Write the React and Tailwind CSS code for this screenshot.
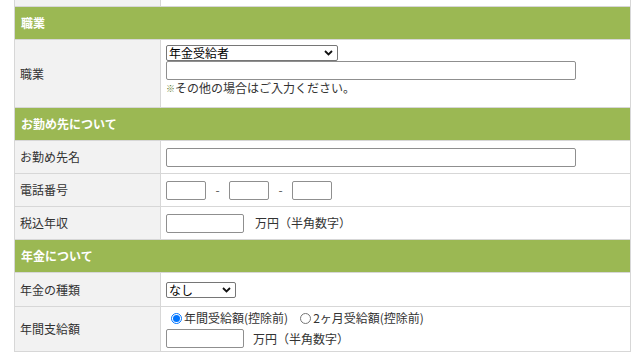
import { useState } from "react";

const font = { fontFamily: '"Noto Sans CJK JP", "Noto Sans", sans-serif' };

function Chevron() {
    return (
        <svg width="9" height="6" viewBox="0 0 9 6" className="shrink-0">
            <path d="M1 1 L4.5 4.5 L8 1" stroke="#111" strokeWidth="1.8" fill="none" />
        </svg>
    );
}

function FakeSelect({ value, width }) {
    return (
        <div className={`flex items-center justify-between h-[16px] pl-[2px] pr-[4px] border border-[#767676] rounded-[2px] bg-white text-[12px] leading-none text-black ${width}`}>
            <span>{value}</span>
            <Chevron />
        </div>
    );
}

function Box({ width, height = "h-[19px]" }) {
    return <div className={`${width} ${height} border border-[#8f8f8f] rounded-[2px] bg-white`} />;
}

function Header({ title }) {
    return (
        <div className="h-[33px] flex items-center pl-[6px] bg-[#9bb853] border-b border-[#d7d7d7] text-white font-bold text-[12px]">
            {title}
        </div>
    );
}

function Row({ label, height, top, children }) {
    return (
        <div className={`flex border-b border-[#d7d7d7] ${height}`}>
            <div className="w-[146px] shrink-0 flex items-center pl-[5px] bg-[#f2f2f2] border-r border-[#d7d7d7] text-[12px] text-[#333]">
                {label}
            </div>
            <div className={`flex-1 flex flex-col pl-[5px] text-[12px] text-[#333] bg-white ${top ? "justify-start pt-[5px]" : "justify-center"}`}>
                {children}
            </div>
        </div>
    );
}

export default function App() {
    const [pension, setPension] = useState("year");

    return (
        <div className="w-[640px] h-[360px] bg-white overflow-hidden" style={font}>
            <div className="ml-[14px] w-[617px] border-x border-[#d7d7d7]">
                {/* partial row from above */}
                <div className="flex h-[7px] border-b border-[#d7d7d7]">
                    <div className="w-[146px] bg-[#f2f2f2] border-r border-[#d7d7d7]" />
                    <div className="flex-1" />
                </div>

                <Header title="職業" />
                <Row label="職業" height="h-[68px]" top>
                    <FakeSelect value="年金受給者" width="w-[172px]" />
                    <Box width="w-[410px]" />
                    <div className="mt-[2px] leading-none flex items-center">
                        <span className="text-[9px] text-[#5a7a2a]">※</span>
                        <span>その他の場合はご入力ください。</span>
                    </div>
                </Row>

                <Header title="お勤め先について" />
                <Row label="お勤め先名" height="h-[33px]">
                    <Box width="w-[410px]" />
                </Row>
                <Row label="電話番号" height="h-[33px]">
                    <div className="flex items-center">
                        <Box width="w-[40px]" />
                        <span className="w-[23px] text-center text-[#555]">-</span>
                        <Box width="w-[40px]" />
                        <span className="w-[23px] text-center text-[#555]">-</span>
                        <Box width="w-[40px]" />
                    </div>
                </Row>
                <Row label="税込年収" height="h-[33px]">
                    <div className="flex items-center">
                        <Box width="w-[78px]" />
                        <span className="ml-[11px]">万円（半角数字）</span>
                    </div>
                </Row>

                <Header title="年金について" />
                <Row label="年金の種類" height="h-[34px]">
                    <FakeSelect value="なし" width="w-[70px]" />
                </Row>
                <Row label="年間支給額" height="h-[45px]">
                    <div className="flex items-center h-[16px] leading-none">
                        <label className="flex items-center cursor-pointer" onClick={() => setPension("year")}>
                            <span className={`ml-[5px] mr-[2px] w-[11px] h-[11px] rounded-full border flex items-center justify-center ${pension === "year" ? "border-[#0075ff]" : "border-[#767676]"}`}>
                                {pension === "year" && <span className="w-[7px] h-[7px] rounded-full bg-[#0075ff]" />}
                            </span>
                            年間受給額(控除前)
                        </label>
                        <label className="flex items-center ml-[12px] cursor-pointer" onClick={() => setPension("month")}>
                            <span className={`mr-[2px] w-[11px] h-[11px] rounded-full border flex items-center justify-center ${pension === "month" ? "border-[#0075ff]" : "border-[#767676]"}`}>
                                {pension === "month" && <span className="w-[7px] h-[7px] rounded-full bg-[#0075ff]" />}
                            </span>
                            2ヶ月受給額(控除前)
                        </label>
                    </div>
                    <div className="flex items-center mt-[3px]">
                        <Box width="w-[78px]" />
                        <span className="ml-[9px]">万円（半角数字）</span>
                    </div>
                </Row>
            </div>
        </div>
    );
}
